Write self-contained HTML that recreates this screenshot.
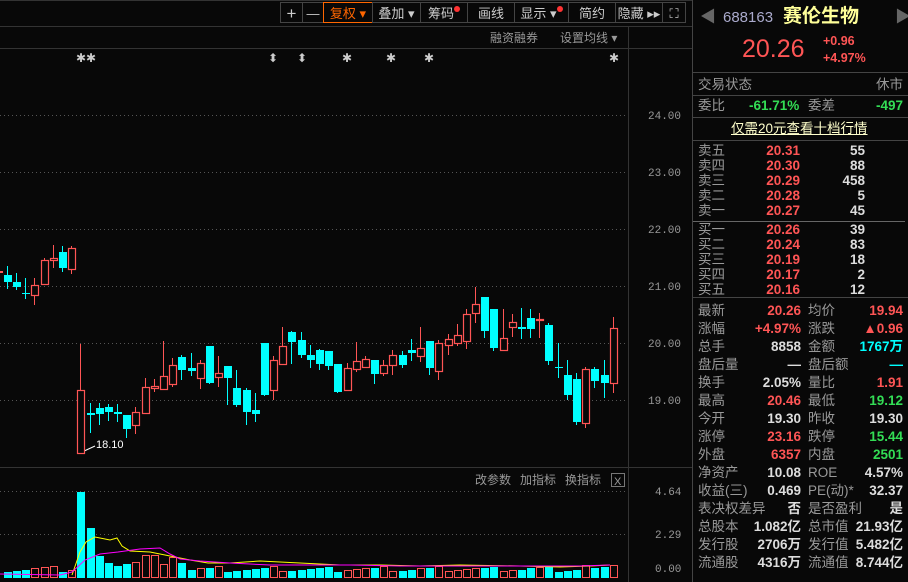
<!DOCTYPE html>
<html><head><meta charset="utf-8"><style>
body{margin:0;width:908px;height:582px;background:#080808;overflow:hidden;font-family:"Liberation Sans","Noto Sans CJK SC",sans-serif;position:relative}
.a{position:absolute;white-space:nowrap}
.btn{position:absolute;top:2px;height:21px;border:1px solid #444;color:#ccc;font-size:13px;line-height:21px;text-align:center;box-sizing:border-box}
.dot{display:inline-block;width:6px;height:6px;border-radius:3px;background:#f33;vertical-align:top;margin-top:3px}
.r{color:#ff5555}.g{color:#33dd55}.w{color:#ddd}.l{color:#999}.c{color:#00ffff}
#rp div{position:absolute;font-size:13.5px;line-height:15px}
#rp div.r,#rp div.g,#rp div.w,#rp div.c{font-weight:bold}
</style></head><body>
<svg class="a" style="left:0;top:0" width="908" height="582" id="sv">
<line x1="0" y1="0.5" x2="692" y2="0.5" stroke="#333"/>
<line x1="0" y1="26.5" x2="692" y2="26.5" stroke="#333"/>
<line x1="0" y1="48.5" x2="692" y2="48.5" stroke="#333"/>
<line x1="628.5" y1="26" x2="628.5" y2="582" stroke="#333"/>
<line x1="0" y1="467.5" x2="692" y2="467.5" stroke="#333"/>
<line x1="692.5" y1="0" x2="692.5" y2="582" stroke="#444"/>
<g stroke="#555" stroke-dasharray="1 3">
<line x1="0" y1="115.5" x2="628" y2="115.5"/><line x1="0" y1="172.5" x2="628" y2="172.5"/><line x1="0" y1="229.5" x2="628" y2="229.5"/><line x1="0" y1="286.5" x2="628" y2="286.5"/><line x1="0" y1="343.5" x2="628" y2="343.5"/><line x1="0" y1="400.5" x2="628" y2="400.5"/>
<line x1="0" y1="491.5" x2="628" y2="491.5"/><line x1="0" y1="534.5" x2="628" y2="534.5"/>
</g>
<g fill="#999" font-size="11" font-family="Liberation Mono,monospace">
<text x="648" y="119">24.00</text><text x="648" y="176">23.00</text><text x="648" y="233">22.00</text><text x="648" y="290">21.00</text><text x="648" y="347">20.00</text><text x="648" y="404">19.00</text>
<text x="655" y="495">4.64</text><text x="655" y="538">2.29</text><text x="655" y="572">0.00</text>
</g>
<g fill="#ccc" font-size="12"><text x="76" y="62">✱✱</text><text x="268" y="62">⬍</text><text x="297" y="62">⬍</text><text x="342" y="62">✱</text><text x="386" y="62">✱</text><text x="424" y="62">✱</text><text x="609" y="62">✱</text></g>
<line x1="82" y1="452" x2="95" y2="446" stroke="#fff"/>
<text x="96" y="448" fill="#fff" font-size="11">18.10</text>
<g id="cd"></g><g id="vb"></g>
<polyline fill="none" stroke="#ffff00" points="72,575 80,552 86,542 95,537 110,540 117,538 122,546 130,551 150,552 170,556 190,560 208,563 230,563 260,561 300,563 340,565 380,565 420,566 460,565 520,566 560,567 590,566 610,565"/>
<polyline fill="none" stroke="#ff00ff" points="0,574 60,575 72,572 85,560 100,554 118,552 140,549 160,548 170,554 180,559 200,561 230,563 270,565 350,565 400,566 450,566 520,566 580,566 610,565"/>
<text x="475" y="484" fill="#999" font-size="12">改参数</text><text x="520" y="484" fill="#999" font-size="12">加指标</text><text x="565" y="484" fill="#999" font-size="12">换指标</text>
<rect x="611.5" y="473.5" width="13" height="13" fill="none" stroke="#777"/><text x="614" y="485" fill="#999" font-size="11">X</text>
<text x="490" y="42" fill="#999" font-size="12">融资融券</text><text x="560" y="42" fill="#999" font-size="12">设置均线 ▾</text>
</svg>
<div class="btn" style="left:280px;width:23px;font-size:17px">+</div>
<div class="btn" style="left:302px;width:22px">—</div>
<div class="btn" style="left:323px;width:50px;border-color:#ff6600;color:#ff6600">复权 ▾</div>
<div class="btn" style="left:372px;width:49px">叠加 ▾</div>
<div class="btn" style="left:420px;width:48px">筹码<span class="dot"></span></div>
<div class="btn" style="left:467px;width:48px">画线</div>
<div class="btn" style="left:514px;width:55px">显示 ▾<span class="dot"></span></div>
<div class="btn" style="left:568px;width:48px">简约</div>
<div class="btn" style="left:615px;width:48px">隐藏 ▸▸</div>
<div class="btn" style="left:662px;width:24px">⛶</div>
<div id="rp">
<div style="left:700px;top:10px;color:#666;font-size:16px">◀</div><div style="left:895px;top:10px;color:#666;font-size:16px">▶</div>
<div style="left:723px;top:10px;color:#aac;font-size:15px">688163</div>
<div style="left:783px;top:7px;color:#ffff99;font-size:19px;font-weight:bold;line-height:20px">赛伦生物</div>
<div class="r" style="left:742px;top:35px;font-size:25px;line-height:28px;font-weight:normal!important">20.26</div>
<div class="r" style="left:823px;top:34px;font-size:12.5px">+0.96</div>
<div class="r" style="left:823px;top:51px;font-size:12.5px">+4.97%</div>
<div style="left:693px;top:72px;width:215px;height:1px;background:#444"></div>
<div class="l" style="left:698px;top:77px">交易状态</div><div class="l" style="left:876px;top:77px">休市</div>
<div style="left:693px;top:95px;width:215px;height:1px;background:#444"></div>
<div class="l" style="left:698px;top:98px">委比</div><div class="g" style="left:749px;top:98px">-61.71%</div><div class="l" style="left:808px;top:98px">委差</div><div class="g" style="left:876px;top:98px">-497</div>
<div style="left:693px;top:117px;width:215px;height:1px;background:#444"></div>
<div style="left:731px;top:121px;color:#ffffcc;text-decoration:underline">仅需20元查看十档行情</div>
<div style="left:693px;top:140px;width:215px;height:1px;background:#444"></div>
<div style="left:693px;top:221px;width:212px;height:1px;background:#666"></div>
<div style="left:693px;top:297px;width:215px;height:1px;background:#444"></div>
</div>
<script>
var rp=document.getElementById('rp');
function T(x,y,t,c,al){var d=document.createElement('div');d.className=c;d.textContent=t;d.style.top=y+'px';if(al){d.style.right=(908-x)+'px'}else d.style.left=x+'px';rp.appendChild(d)}
var ob=[['卖五','20.31','55'],['卖四','20.30','88'],['卖三','20.29','458'],['卖二','20.28','5'],['卖一','20.27','45']];
ob.forEach(function(o,i){T(698,143+i*15,o[0],'l');T(800,143+i*15,o[1],'r',1);T(865,143+i*15,o[2],'w',1)});
var ob2=[['买一','20.26','39'],['买二','20.24','83'],['买三','20.19','18'],['买四','20.17','2'],['买五','20.16','12']];
ob2.forEach(function(o,i){T(698,222+i*15,o[0],'l');T(800,222+i*15,o[1],'r',1);T(865,222+i*15,o[2],'w',1)});
var st=[['最新','20.26','r','均价','19.94','r'],['涨幅','+4.97%','r','涨跌','▲0.96','r'],['总手','8858','w','金额','1767万','c'],['盘后量','—','w','盘后额','—','c'],['换手','2.05%','w','量比','1.91','r'],['最高','20.46','r','最低','19.12','g'],['今开','19.30','w','昨收','19.30','w'],['涨停','23.16','r','跌停','15.44','g'],['外盘','6357','r','内盘','2501','g'],['净资产','10.08','w','ROE','4.57%','w'],['收益(三)','0.469','w','PE(动)*','32.37','w'],['表决权差异','否','w','是否盈利','是','w'],['总股本','1.082亿','w','总市值','21.93亿','w'],['发行股','2706万','w','发行值','5.482亿','w'],['流通股','4316万','w','流通值','8.744亿','w']];
st.forEach(function(o,i){var y=303+i*18;T(698,y,o[0],'l');T(801,y,o[1],o[2],1);T(808,y,o[3],'l');T(903,y,o[4],o[5],1)});
var C=[[7,'c',266,275,282,289],[16,'c',273,282,287,290],[25,'c',278,293,294,299],[34,'r',278,285,295,305],[44,'r',258,260,284,284],[53,'r',245,258,260,268],[62,'c',246,252,268,272],[71,'r',246,248,269,274],
[80,'r',344,390,453,453],[90,'c',403,413,415,433],[99,'c',403,408,414,425],[108,'c',404,407,412,421],[117,'c',404,412,414,422],[126,'c',415,415,429,438],[135,'r',407,412,425,434],[145,'r',378,387,413,413],[154,'r',379,386,388,392],[163,'r',341,376,389,389],[172,'r',358,365,384,387],[181,'c',355,357,370,380],[191,'c',353,368,371,376],[200,'r',360,363,378,389],[209,'c',346,346,383,384],[218,'r',356,373,377,387],[227,'c',366,366,378,405],[236,'c',370,388,405,407],[246,'c',388,390,412,425],[255,'c',393,410,414,422],[264,'c',343,343,395,396],[273,'r',356,360,390,400],[282,'r',327,346,364,364],[291,'c',331,332,342,364],[301,'c',332,340,355,358],[310,'c',345,355,360,368],[319,'c',349,350,364,370],[328,'c',351,351,366,370],
[337,'c',364,364,392,393],[347,'r',363,368,390,390],[356,'r',342,361,369,372],[365,'r',356,359,367,368],[374,'c',360,360,374,384],[383,'r',360,365,373,376],[392,'r',350,355,365,375],[402,'c',351,355,365,368],[411,'c',339,350,353,361],[420,'r',327,348,356,362],[429,'c',341,341,368,375],[438,'r',340,343,371,380],[448,'r',334,339,345,355],[457,'r',324,335,343,346],[466,'r',309,314,341,349],[475,'r',287,304,313,323],[484,'c',297,297,331,338],[493,'c',309,309,348,351],[503,'r',309,338,350,350],[512,'r',314,322,327,337],[521,'c',308,327,329,339],[530,'c',309,318,329,338],[539,'r',313,319,320,338],[548,'c',323,325,361,365],[558,'c',343,367,368,378],[567,'c',360,375,395,400],[576,'c',373,379,422,425],[585,'r',367,369,423,428],[594,'c',367,369,381,388],[604,'c',360,375,383,398],[613,'r',317,328,383,393]];
var h='',v='',vh={80:86,90:50,99:22,108:15,117:12,126:14,135:15,145:22,154:22,163:13,172:20,181:15,483:10,530:10,540:10,585:12,613:12};
C.forEach(function(c,i){var x=c[0],col=c[1]=='r'?'#ff5555':'#00ffff';
h+='<line x1="'+(x+.5)+'" y1="'+c[2]+'" x2="'+(x+.5)+'" y2="'+c[5]+'" stroke="'+col+'"/>';
var bh=Math.max(c[4]-c[3],1);
if(c[1]=='r')h+='<rect x="'+(x-3)+'.5" y="'+(c[3]+.5)+'" width="7" height="'+bh+'" fill="#080808" stroke="'+col+'" stroke-width="1.2"/>';
else h+='<rect x="'+(x-3)+'" y="'+c[3]+'" width="8" height="'+bh+'" fill="'+col+'"/>';
var vv=vh[x]||(6+((i*7)%6));var vcol=(x==80||x==90)?'#00ffff':col;var vr=(x==80||x==90)?'c':c[1];
if(vr=='r')v+='<rect x="'+(x-3)+'.5" y="'+(577-vv)+'.5" width="7" height="'+vv+'" fill="none" stroke="'+vcol+'"/>';
else v+='<rect x="'+(x-3)+'" y="'+(578-vv)+'" width="8" height="'+vv+'" fill="'+vcol+'"/>';});
h+='<rect x="0" y="271" width="3" height="2" fill="#ff5555"/>';
document.getElementById('cd').innerHTML=h;document.getElementById('vb').innerHTML=v;
</script>
</body></html>
